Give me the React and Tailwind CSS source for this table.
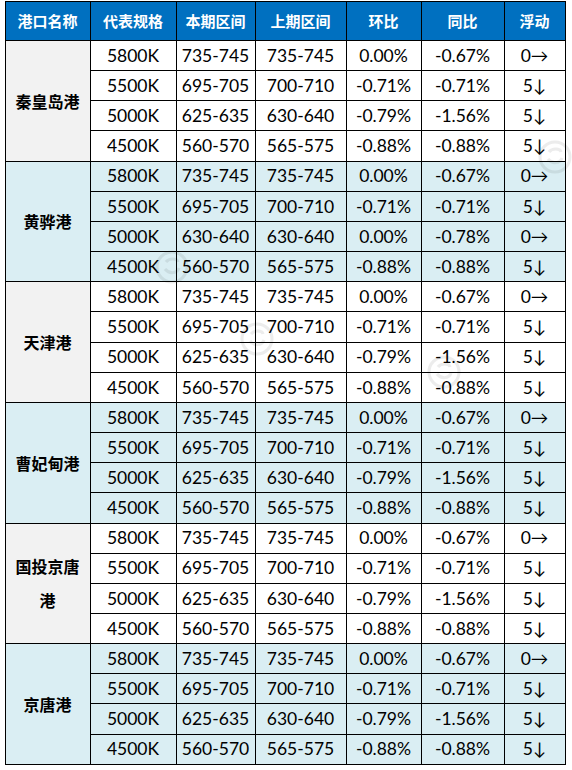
import React from "react";

const COLS = [
  { label: "港口名称", w: "w-[85px]" },
  { label: "代表规格", w: "w-[86px]" },
  { label: "本期区间", w: "w-[79px]" },
  { label: "上期区间", w: "w-[91px]" },
  { label: "环比", w: "w-[75px]" },
  { label: "同比", w: "w-[83px]" },
  { label: "浮动", w: "w-[61px]" },
];

const SPECS = ["5800K", "5500K", "5000K", "4500K"];

const STD = [
  ["735-745", "735-745", "0.00%", "-0.67%", "0→"],
  ["695-705", "700-710", "-0.71%", "-0.71%", "5↓"],
  ["625-635", "630-640", "-0.79%", "-1.56%", "5↓"],
  ["560-570", "565-575", "-0.88%", "-0.88%", "5↓"],
];

const PORTS = [
  { name: "秦皇岛港", rows: STD },
  {
    name: "黄骅港",
    rows: [
      ["735-745", "735-745", "0.00%", "-0.67%", "0→"],
      ["695-705", "700-710", "-0.71%", "-0.71%", "5↓"],
      ["630-640", "630-640", "0.00%", "-0.78%", "0→"],
      ["560-570", "565-575", "-0.88%", "-0.88%", "5↓"],
    ],
  },
  { name: "天津港", rows: STD },
  { name: "曹妃甸港", rows: STD },
  { name: "国投京唐港", rows: STD },
  { name: "京唐港", rows: STD },
];

// faint round site logo used as watermark
function Mark() {
  return (
    <svg width="34" height="34" viewBox="0 0 34 34" className="opacity-[0.07]">
      <circle cx="17" cy="17" r="15" fill="none" stroke="#000" strokeWidth="3" />
      <path d="M11 12c3-4 11-4 12 0M10 19c4 5 12 5 14-1" fill="none" stroke="#000" strokeWidth="3" />
    </svg>
  );
}

export default function App() {
  return (
    <div className="relative w-[572px] h-[770px] bg-white overflow-hidden pl-[4.5px] pt-[1px]">
      <table className="border-collapse table-fixed">
        <colgroup>
          {COLS.map((c) => (
            <col key={c.label} className={c.w} />
          ))}
        </colgroup>
        <thead>
          <tr className="h-[39px]">
            {COLS.map((c) => (
              <th
                key={c.label}
                className="border border-black bg-[#0070c0] text-white text-[15px] font-bold p-0 text-center align-middle font-['Noto_Sans_CJK_SC',sans-serif]"
              >
                {c.label}
              </th>
            ))}
          </tr>
        </thead>
        <tbody>
          {PORTS.map((p, gi) => {
            const blue = gi % 2 === 1;
            const rowBg = blue ? "bg-[#daeef3]" : "bg-white";
            return p.rows.map((r, ri) => (
              <tr key={p.name + ri} className="h-[30.17px]">
                {ri === 0 && (
                  <td
                    rowSpan={4}
                    className={`border border-black ${blue ? "bg-[#daeef3]" : "bg-[#f2f2f2]"} text-black text-[16px] font-bold leading-[34px] text-center align-middle px-1 font-['Noto_Sans_CJK_SC',sans-serif]`}
                  >
                    {p.name}
                  </td>
                )}
                {[SPECS[ri], ...r].map((v, ci) => (
                  <td
                    key={ci}
                    className={`border border-black ${rowBg} text-black text-[17.5px] leading-none p-0 text-center align-middle font-['Lato','Noto_Sans_CJK_SC',sans-serif]`}
                  >
                    {v}
                  </td>
                ))}
              </tr>
            ));
          })}
        </tbody>
      </table>
      <div className="absolute left-[538px] top-[140px] pointer-events-none">
        <Mark />
      </div>
      <div className="absolute left-[240px] top-[322px] pointer-events-none">
        <Mark />
      </div>
      <div className="absolute left-[427px] top-[355px] pointer-events-none">
        <Mark />
      </div>
      <div className="absolute left-[155px] top-[250px] pointer-events-none">
        <Mark />
      </div>
    </div>
  );
}
